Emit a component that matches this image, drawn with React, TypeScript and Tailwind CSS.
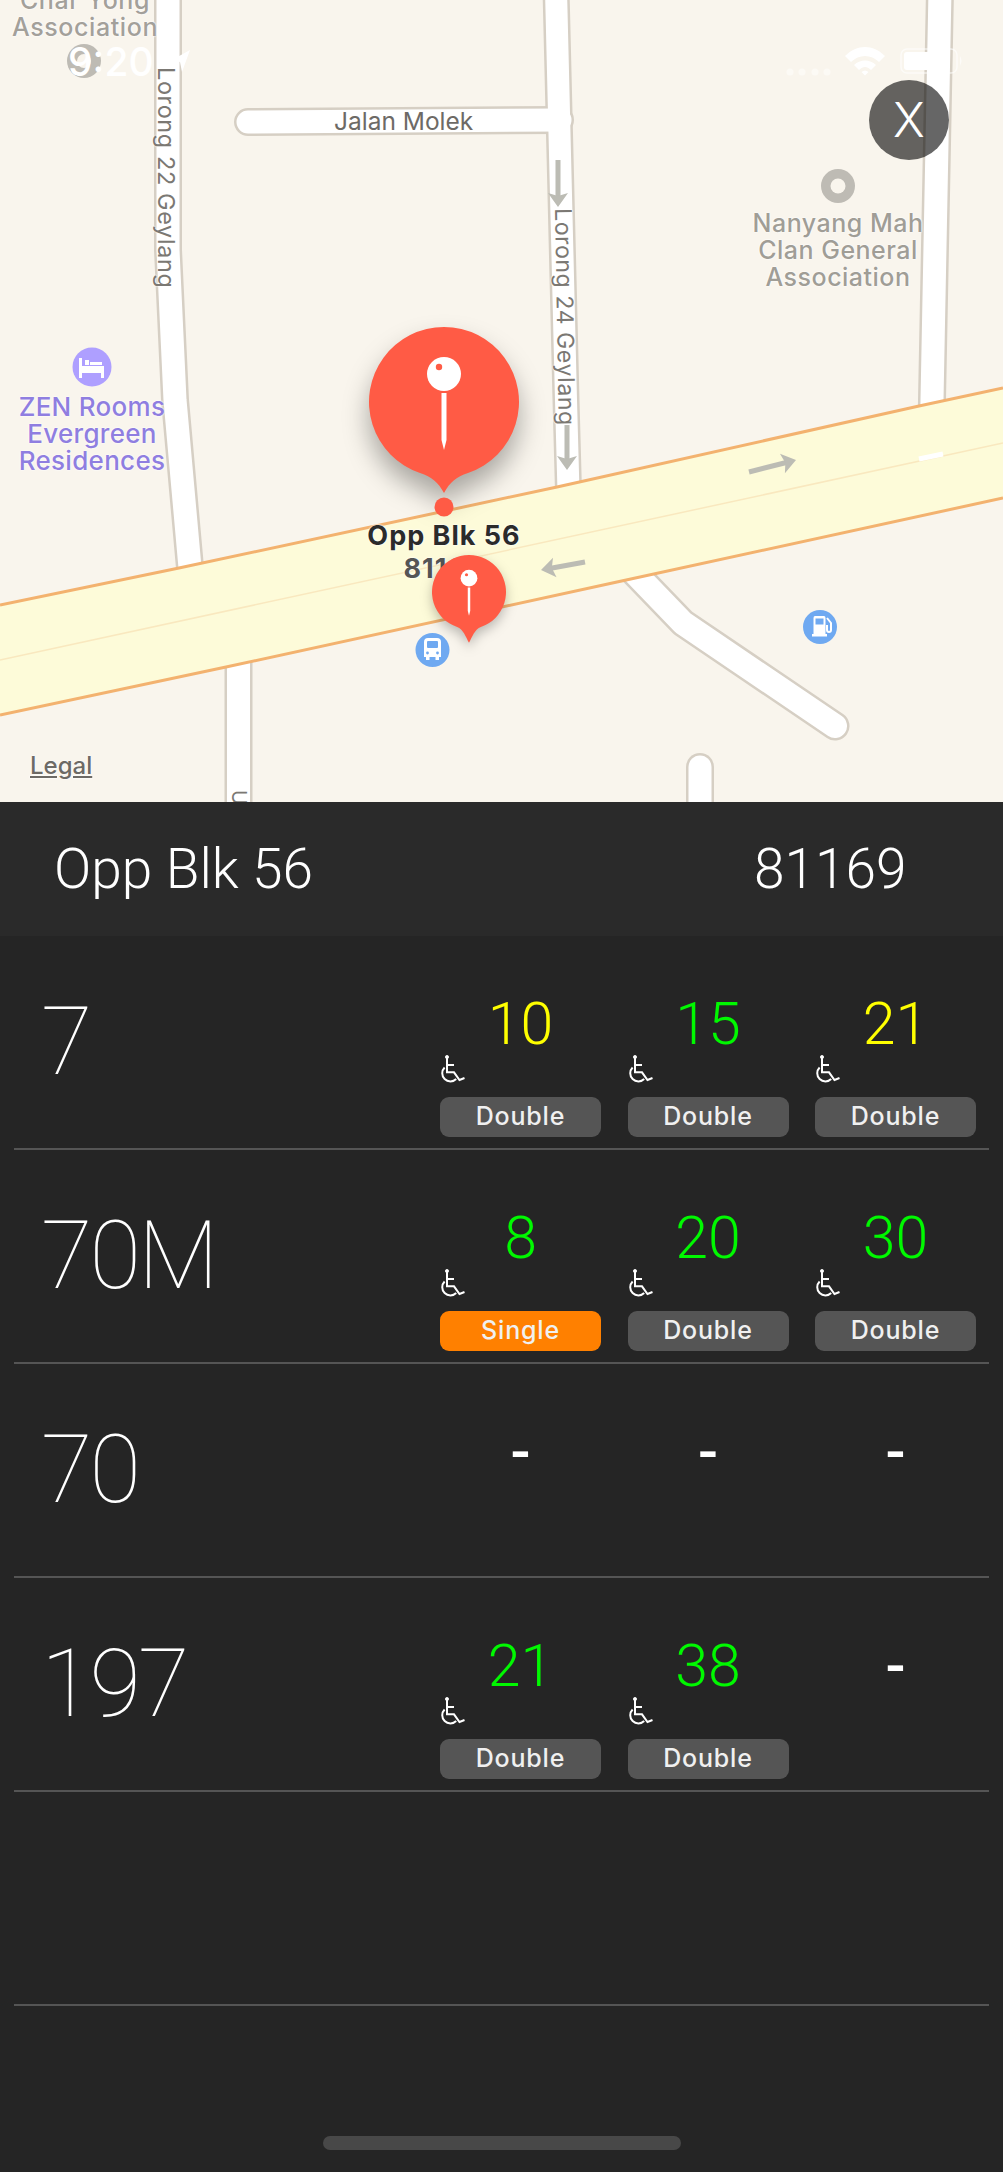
import React from 'react';

type Arrival = { mins: string; color?: string; deck?: string };
type Service = { no: string; arrivals: (Arrival | null)[] };

const YELLOW = 'text-[#ffff00]';
const GREEN = 'text-[#00f800]';

const services: Service[] = [
  {
    no: '7',
    arrivals: [
      { mins: '10', color: YELLOW, deck: 'Double' },
      { mins: '15', color: GREEN, deck: 'Double' },
      { mins: '21', color: YELLOW, deck: 'Double' },
    ],
  },
  {
    no: '70M',
    arrivals: [
      { mins: '8', color: GREEN, deck: 'Single' },
      { mins: '20', color: GREEN, deck: 'Double' },
      { mins: '30', color: GREEN, deck: 'Double' },
    ],
  },
  { no: '70', arrivals: [null, null, null] },
  {
    no: '197',
    arrivals: [
      { mins: '21', color: GREEN, deck: 'Double' },
      { mins: '38', color: GREEN, deck: 'Double' },
      null,
    ],
  },
];

const roads = [
  { d: 'M168 -10 L168 250 L175 400 L192 590', w: 27 },
  { d: 'M556 -10 L566 400 L569 510', w: 26 },
  { d: 'M940 -10 L932 400 L931 470', w: 27 },
  { d: 'M248 122 L560 120', w: 27 },
  { d: 'M238.5 650 L238.5 820', w: 27 },
  { d: 'M630 568 L683 623 L835 726', w: 28 },
  { d: 'M700 767 L700 820', w: 27 },
];

const MapArrow = ({ x1, y1, x2, y2 }: { x1: number; y1: number; x2: number; y2: number }) => {
  const a = (Math.atan2(y2 - y1, x2 - x1) * 180) / Math.PI;
  return (
    <g transform={`translate(${x2} ${y2}) rotate(${a})`} fill="#bcbcb4">
      <rect x={-Math.hypot(x2 - x1, y2 - y1)} y={-2.5} width={Math.hypot(x2 - x1, y2 - y1) - 10} height={5} />
      <path d="M0 0 L-14 -10 L-11 0 L-14 10 Z" />
    </g>
  );
};

const Wheelchair = () => (
  <svg width="27" height="29" viewBox="0 0 27 29" fill="none" stroke="#fff" strokeWidth="2" className="block">
    <circle cx="9" cy="2" r="1.6" fill="#fff" strokeWidth="0.8" />
    <path d="M9 3 V17.3 H16 L21.5 25 L26.5 23" />
    <path d="M9 10 H16" />
    <path d="M6.6 12.5 A8 8 0 1 0 18.2 24" />
  </svg>
);

const MapMarker = ({ x, y, r, tip = 91 }: { x: number; y: number; r: number; tip?: number }) => {
  const k = r / 75;
  return (
    <g transform={`translate(${x} ${y}) scale(${k})`}>
      <path
        d={`M-24 71 A75 75 0 1 1 24 71 C12 75 6 ${tip - 11} 0 ${tip} C-6 ${tip - 11} -12 75 -24 71 Z`}
        fill="#ff5b45"
      />
      <circle cx="0" cy="-28" r="17" fill="#fff" />
      <circle cx="-5" cy="-35" r="3.2" fill="#ff5b45" />
      <path d="M-2.5 -9 H2.5 V38 L0 48 L-2.5 38 Z" fill="#fff" />
    </g>
  );
};

const mapLabel = 'absolute whitespace-nowrap font-["Inter",sans-serif] [text-shadow:0_0_2px_#fff,0_0_2px_#fff]';

const MapView = () => (
  <div className="relative h-[802px] overflow-hidden bg-[#f9f5ed]">
    <svg className="absolute inset-0" width="1003" height="802" viewBox="0 0 1003 802">
      {roads.map((r) => (
        <path key={r.d} d={r.d} fill="none" stroke="#d6cfc4" strokeWidth={r.w + 1} strokeLinecap="round" strokeLinejoin="round" />
      ))}
      {roads.map((r) => (
        <path key={r.d} d={r.d} fill="none" stroke="#ffffff" strokeWidth={r.w - 4} strokeLinecap="round" strokeLinejoin="round" />
      ))}
      <path d="M0 605 L179 568 L557 487 L919 406 L1003 388 L1003 498 L659 573 L617 582 L226 667 L0 715 Z" fill="#fdfbd9" />
      <path d="M0 605 L179 568 L557 487 L919 406 L1003 388" fill="none" stroke="#f3b26f" strokeWidth="3" />
      <path d="M0 715 L226 667 L617 582 L1003 498" fill="none" stroke="#f3b26f" strokeWidth="3" />
      <path d="M0 660 L1003 443" fill="none" stroke="#f9e8bf" strokeWidth="1.5" />
      <path d="M919 459 L943 454" fill="none" stroke="#ffffff" strokeWidth="5" />
      <MapArrow x1={558} y1={160} x2={558} y2={207} />
      <MapArrow x1={567} y1={425} x2={567} y2={470} />
      <MapArrow x1={749} y1={472} x2={796} y2={460} />
      <MapArrow x1={585} y1={562} x2={541} y2={570} />
      <circle cx="84" cy="61" r="17" fill="#bebbb4" />
      <circle cx="84" cy="61" r="7" fill="#f9f5ed" />
      <circle cx="838" cy="186" r="17" fill="#bebbb4" />
      <circle cx="838" cy="186" r="7.5" fill="#f9f5ed" />
      <circle cx="92" cy="367" r="19.5" fill="#ae9fff" />
      <path d="M79 358 H82 V366 H104 V378 H101 V373 H82 V378 H79 Z M85 360 H89 V365 H85 Z M90 362 H102 V365 H90 Z" fill="#fff" />
      <circle cx="432.5" cy="650" r="17" fill="#6fa9f1" />
      <path d="M428 638 H437 Q441 638 441 642 V657 H439 V660 H435.5 V657 H429.5 V660 H426 V657 H424 V642 Q424 638 428 638 Z" fill="#fff" />
      <rect x="427" y="641" width="11" height="7" rx="1" fill="#6fa9f1" />
      <circle cx="427.5" cy="653" r="1.4" fill="#6fa9f1" />
      <circle cx="437.5" cy="653" r="1.4" fill="#6fa9f1" />
      <circle cx="820" cy="627" r="17" fill="#6fa9f1" />
      <path d="M815 616 H824 Q825.500 616 825.500 618 V634 H827 V636.500 H812 V634 H813.500 V618 Q813.500 616 815 616 Z" fill="#fff" />
      <rect x="815.500" y="618.500" width="8" height="6" fill="#6fa9f1" />
      <path d="M827 618 L831 623 V630 Q831 632 829 632 Q827 632 827 630 V625" fill="none" stroke="#fff" strokeWidth="2" />
    </svg>

    <div className={`${mapLabel} left-[-15px] top-[-13px] w-[200px] text-center text-[25px] leading-[27px] font-medium tracking-[0.6px] text-[#a3a09a]`}>
      Char Yong
      <br />
      Association
    </div>
    <div className={`${mapLabel} left-[334px] top-[108px] text-[24.500px] leading-[27px] text-[#6d6a66]`}>Jalan Molek</div>
    <div className={`${mapLabel} left-[166px] top-[67px] origin-top-left rotate-90 text-[23.500px] leading-[22px] translate-x-[11px] tracking-[0.6px] text-[#7b7873]`}>
      Lorong 22 Geylang
    </div>
    <div className={`${mapLabel} left-[563px] top-[208px] origin-top-left rotate-[89deg] text-[23px] leading-[22px] translate-x-[11px] tracking-[0.6px] text-[#7b7873]`}>
      Lorong 24 Geylang
    </div>
    <div className={`${mapLabel} left-[738px] top-[210px] w-[200px] text-center text-[25px] leading-[27px] font-medium tracking-[0.5px] text-[#a09d96]`}>
      Nanyang Mah
      <br />
      Clan General
      <br />
      Association
    </div>
    <div className={`${mapLabel} left-[-8px] top-[393px] w-[200px] text-center text-[26px] leading-[27px] font-medium tracking-[0.3px] text-[#8f7ee0]`}>
      ZEN Rooms
      <br />
      Evergreen
      <br />
      Residences
    </div>
    <div className={`${mapLabel} left-[30px] top-[752px] text-[24px] leading-[27px] font-medium text-[#6d6a66] underline`}>Legal</div>
    <div className={`${mapLabel} left-[250px] top-[790px] origin-top-left rotate-90 text-[20px] leading-[22px] text-[#7b7873]`}>U</div>

    <svg className="absolute inset-0" width="1003" height="802" viewBox="0 0 1003 802">
      <g className="[filter:drop-shadow(0_15px_13px_rgba(0,0,0,0.32))]">
        <MapMarker x={444} y={402} r={75} />
      </g>
      <circle cx="444" cy="507" r="9.500" fill="#ff5b45" />
    </svg>

    <div className={`${mapLabel} left-[344px] top-[519px] w-[200px] text-center text-[27px] leading-[33px] font-bold tracking-[1px] text-[#2b2b2b]`}>
      Opp Blk 56
      <br />
      <span className="text-[#555555]">81169</span>
    </div>

    <svg className="absolute inset-0" width="1003" height="802" viewBox="0 0 1003 802">
      <g className="[filter:drop-shadow(0_5px_6px_rgba(0,0,0,0.25))]">
        <MapMarker x={469} y={592} r={37} tip={103} />
      </g>
    </svg>

    {/* status bar, white on the map like the real app */}
    <div className="absolute left-[68px] top-[40px] font-['Inter',sans-serif] text-[39px] leading-[44px] font-medium text-white">
      9:20
    </div>
    <svg className="absolute left-0 top-0" width="1003" height="100" viewBox="0 0 1003 100" fill="#fff">
      <path d="M190 50 L172 60 L180 62 L182 72 Z" />
      <g fill="#fcfaf5">
        <circle cx="790" cy="72" r="3.500" />
        <circle cx="802" cy="72" r="3.500" />
        <circle cx="815" cy="72" r="3.500" />
        <circle cx="827" cy="72" r="3.500" />
      </g>
      <path d="M845 56 C857 44 873 44 885 56 L879 62 C871 54 859 54 851 62 Z" />
      <path d="M854 65 C860 59 870 59 876 65 L871 70 C867 66 863 66 859 70 Z" />
      <path d="M861.500 72 C864 70 866 70 868.500 72 L865 75.500 Z" />
      <rect x="901" y="49" width="56" height="24" rx="6" fill="none" stroke="#fff" strokeWidth="1.500" opacity="0.6" />
      <rect x="904" y="52" width="42" height="18" rx="3" />
      <path d="M960 56 Q963 60.500 960 66 Z" opacity="0.6" />
    </svg>

    <button className="absolute left-[869px] top-[80px] flex h-20 w-20 items-center justify-center rounded-full bg-black/60 font-['Inter',sans-serif] text-[48px] leading-none font-light text-white">
      X
    </button>
  </div>
);

const ArrivalCell = ({ arrival }: { arrival: Arrival | null }) => {
  if (!arrival) {
    return (
      <div className="w-[161px] text-center font-['Roboto',sans-serif] text-[59px] leading-[60px] font-medium text-white">
        -
      </div>
    );
  }
  const single = arrival.deck === 'Single';
  return (
    <div className="flex w-[161px] flex-col">
      <div className={`text-center font-['Roboto',sans-serif] text-[59px] leading-[60px] [font-weight:350] ${arrival.color}`}>
        {arrival.mins}
      </div>
      <div className="-ml-[2px] mt-[1px]">
        <Wheelchair />
      </div>
      <div
        className={`mt-[13px] flex h-10 items-center justify-center rounded-[9px] font-['Inter',sans-serif] text-[25px] font-medium tracking-[0.8px] text-[#f0f0f0] ${
          single ? 'bg-[#ff8000]' : 'bg-[#555555]'
        }`}
      >
        {arrival.deck}
      </div>
    </div>
  );
};

const ServiceRow = ({ service }: { service: Service }) => (
  <div className="mx-[14px] flex h-[214px] border-b-2 border-[#555555]">
    <div className="flex-1 pl-[27px] pt-[51px] font-['Roboto',sans-serif] text-[94px] leading-[110px] tracking-[-3px] [font-weight:150] text-white">
      {service.no}
    </div>
    <div className="flex gap-[26.500px] pr-[13px] pt-[58px]">
      {service.arrivals.map((a, i) => (
        <ArrivalCell key={i} arrival={a} />
      ))}
    </div>
  </div>
);

export default function App() {
  return (
    <div className="h-[2172px] w-[1003px] overflow-hidden bg-[#252525]">
      <MapView />
      <div className="flex h-[134px] items-center bg-[#2a2a2a] pl-[54px] font-['Roboto',sans-serif] text-[55px] [font-weight:350] text-white">
        <div className="w-[700px]">Opp Blk 56</div>
        <div>81169</div>
      </div>
      {services.map((s) => (
        <ServiceRow key={s.no} service={s} />
      ))}
      <div className="mx-[14px] h-[214px] border-b-2 border-[#555555]" />
      <div className="mx-auto mt-[130px] h-[14px] w-[358px] rounded-full bg-[#484848]" />
    </div>
  );
}
